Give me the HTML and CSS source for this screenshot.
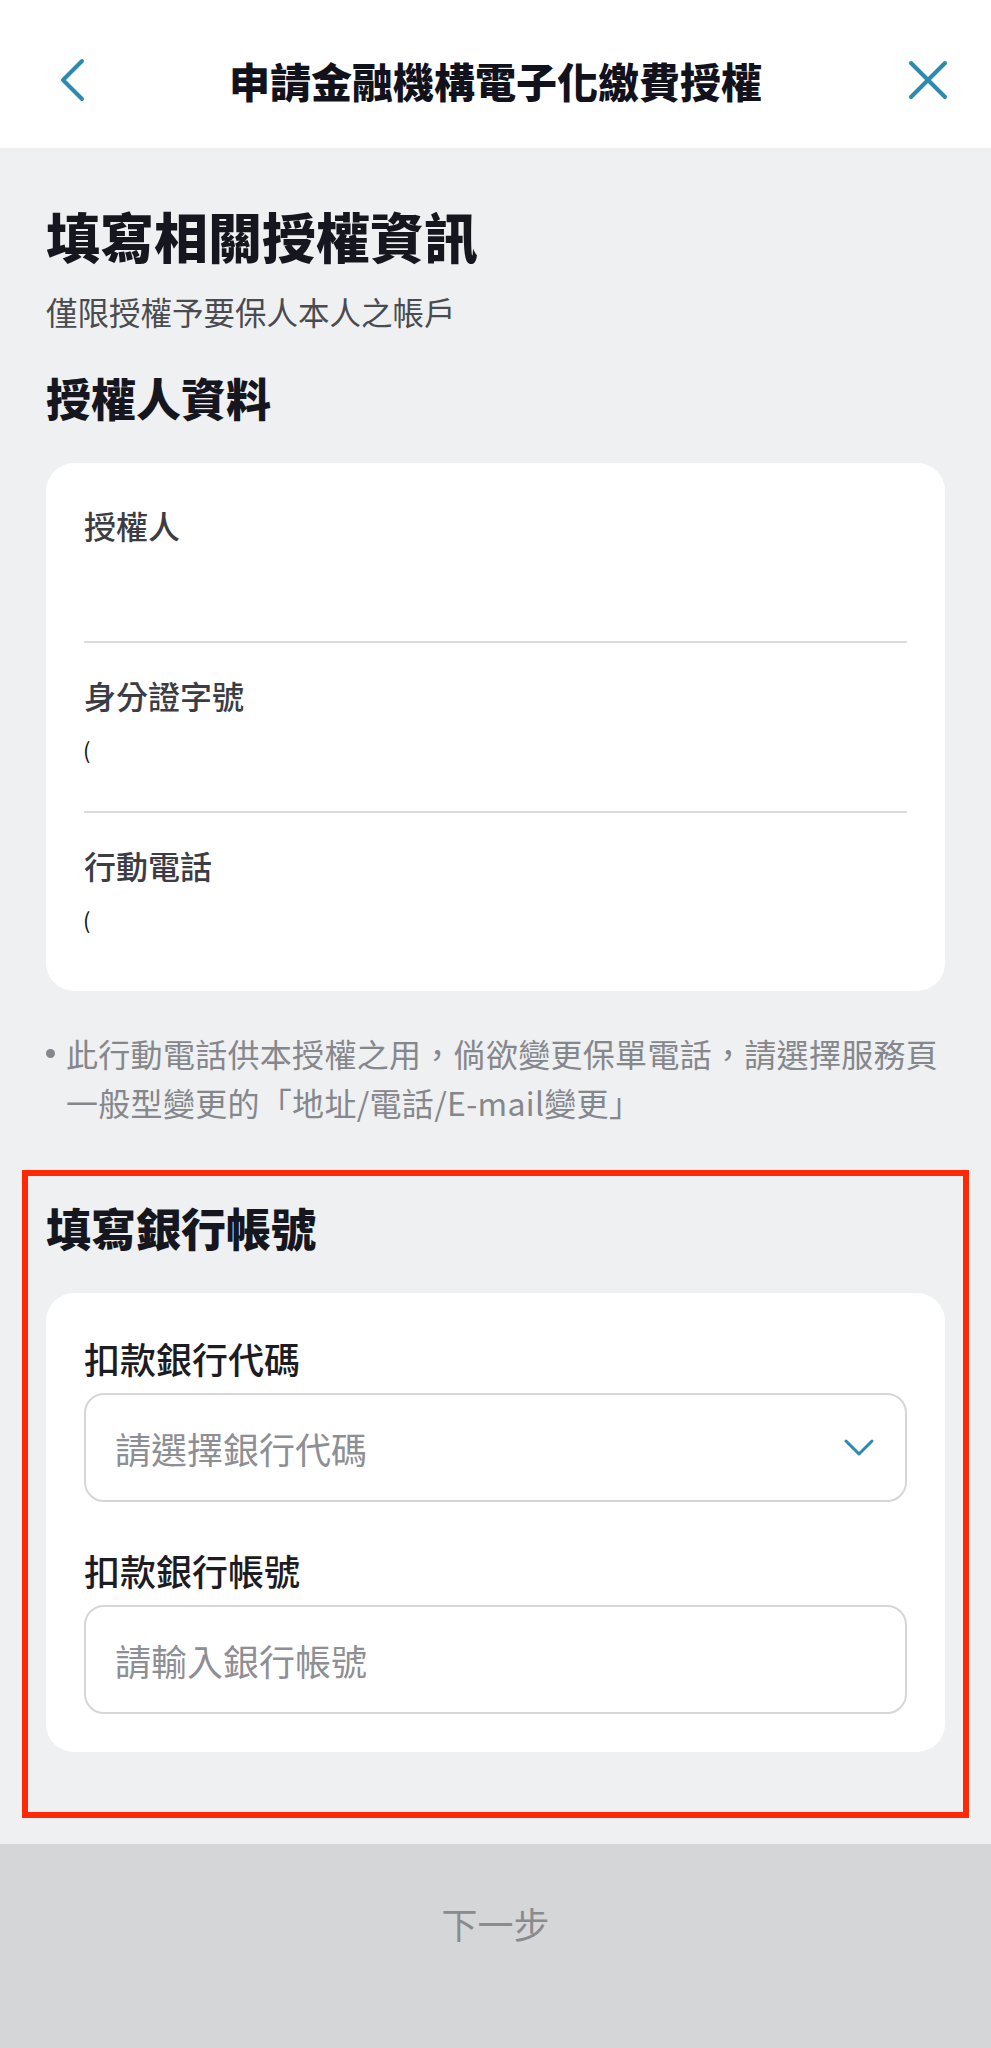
FILE: index.html
```html
<!DOCTYPE html>
<html lang="zh-Hant">
<head>
    <meta charset="UTF-8">
    <meta name="viewport" content="width=device-width, initial-scale=1.0">
    <title>申請金融機構電子化繳費授權</title>
    <link rel="stylesheet" href="styles.css">
</head>
<body>
    <header class="topbar">
        <button class="icon-btn back" aria-label="返回">
            <svg width="30" height="44" viewBox="0 0 30 44">
                <polyline points="25,3 6,22 25,41" fill="none" stroke="#2b8ab2" stroke-width="4" stroke-linecap="round" stroke-linejoin="round"/>
            </svg>
        </button>
        <h1>申請金融機構電子化繳費授權</h1>
        <button class="icon-btn close" aria-label="關閉">
            <svg width="42" height="42" viewBox="0 0 42 42">
                <line x1="4" y1="4" x2="38" y2="38" stroke="#2b8ab2" stroke-width="4" stroke-linecap="round"/>
                <line x1="38" y1="4" x2="4" y2="38" stroke="#2b8ab2" stroke-width="4" stroke-linecap="round"/>
            </svg>
        </button>
    </header>

    <main class="content">
        <h2 class="page-title">填寫相關授權資訊</h2>
        <p class="page-sub">僅限授權予要保人本人之帳戶</p>

        <h3 class="section-title">授權人資料</h3>
        <div class="card info-card">
            <div class="field">
                <div class="field-label">授權人</div>
                <div class="field-value"></div>
            </div>
            <div class="field">
                <div class="field-label">身分證字號</div>
                <div class="field-value"><span class="masked">(</span></div>
            </div>
            <div class="field">
                <div class="field-label">行動電話</div>
                <div class="field-value"><span class="masked">(</span></div>
            </div>
        </div>

        <ul class="notes">
            <li><span class="dot"></span><span>此行動電話供本授權之用，倘欲變更保單電話，請選擇服務頁一般型變更的「地址/電話/E-mail變更」</span></li>
        </ul>

        <section class="bank-section">
            <h3 class="section-title">填寫銀行帳號</h3>
            <div class="card form-card">
                <label class="form-label">扣款銀行代碼</label>
                <div class="input-box select-box">
                    <span class="placeholder">請選擇銀行代碼</span>
                    <svg width="32" height="20" viewBox="0 0 32 20">
                        <polyline points="3,3 16,16 29,3" fill="none" stroke="#2b8ab2" stroke-width="3" stroke-linecap="round" stroke-linejoin="round"/>
                    </svg>
                </div>
                <label class="form-label second">扣款銀行帳號</label>
                <div class="input-box">
                    <span class="placeholder">請輸入銀行帳號</span>
                </div>
            </div>
        </section>
    </main>

    <footer class="bottom-bar">
        <button class="next-btn">下一步</button>
    </footer>
</body>
</html>
```

FILE: styles.css
```css
* {
    margin: 0;
    padding: 0;
    box-sizing: border-box;
    font-family: 'Noto Sans CJK TC', 'Noto Sans', sans-serif;
}

body {
    background: #eef0f1;
    color: #16161f;
    width: 991px;
}

button {
    border: none;
    background: none;
    cursor: pointer;
}

/* Top bar */
.topbar {
    height: 148px;
    padding-top: 12px;
    background: #fff;
    display: grid;
    grid-template-columns: 1fr auto 1fr;
    align-items: center;
}

.topbar h1 {
    font-size: 41px;
    font-weight: 900;
    line-height: 56px;
    color: #12121c;
}

.icon-btn {
    display: flex;
}

.icon-btn.back {
    justify-self: start;
    margin-left: 57px;
}

.icon-btn.close {
    justify-self: end;
    margin-right: 42px;
}

/* Content */
.content {
    padding: 0 46px;
}

.page-title {
    margin-top: 53px;
    font-size: 54px;
    line-height: 70px;
    font-weight: 900;
}

.page-sub {
    margin-top: 16px;
    font-size: 31.5px;
    line-height: 48px;
    color: #4a4b50;
}

.section-title {
    margin-top: 35px;
    font-size: 45px;
    line-height: 56px;
    font-weight: 900;
}

.card {
    background: #fff;
    border-radius: 28px;
    margin-top: 37px;
}

.info-card {
    padding: 10px 38px;
}

.field {
    padding: 30px 0 40px;
    border-bottom: 2px solid #dcdcde;
}

.field:last-child {
    border-bottom: none;
}

.field-label {
    font-size: 32px;
    line-height: 44px;
    font-weight: 500;
    color: #3c3d44;
}

.field-value {
    margin-top: 10px;
    height: 44px;
    font-size: 22px;
    line-height: 44px;
    color: #111;
}

.masked {
    display: inline-block;
    margin-left: -1px;
}

/* Notes */
.notes {
    list-style: none;
    margin-top: 38px;
    font-size: 32px;
    line-height: 49px;
    letter-spacing: 0.3px;
    color: #85878c;
}

.notes li {
    display: flex;
    align-items: flex-start;
}

.notes .dot {
    flex: 0 0 9px;
    height: 9px;
    margin: 20px 11px 0 0;
    border-radius: 50%;
    background: #85878c;
}

/* Bank section (annotated) */
.bank-section {
    margin: 43px -24px 0;
    padding: 24px 18px 60px;
    border: 6px solid #ff2a05;
}

.bank-section .section-title {
    margin-top: 0;
}

.form-card {
    padding: 41px 38px 38px;
}

.form-label {
    display: block;
    font-size: 36px;
    line-height: 48px;
    font-weight: 500;
    color: #1c1c22;
}

.form-label.second {
    margin-top: 44px;
}

.input-box {
    margin-top: 11px;
    height: 109px;
    border: 2px solid #d6d6d9;
    border-radius: 20px;
    padding: 0 30px 0 29px;
    display: flex;
    align-items: center;
    justify-content: space-between;
}

.placeholder {
    font-size: 36px;
    color: #8e8f94;
}

/* Bottom bar */
.bottom-bar {
    margin-top: 26px;
    height: 204px;
    background: #d5d6d8;
    padding-top: 55px;
    text-align: center;
}

.next-btn {
    font-size: 36px;
    line-height: 48px;
    color: #8a8b8f;
}
```
